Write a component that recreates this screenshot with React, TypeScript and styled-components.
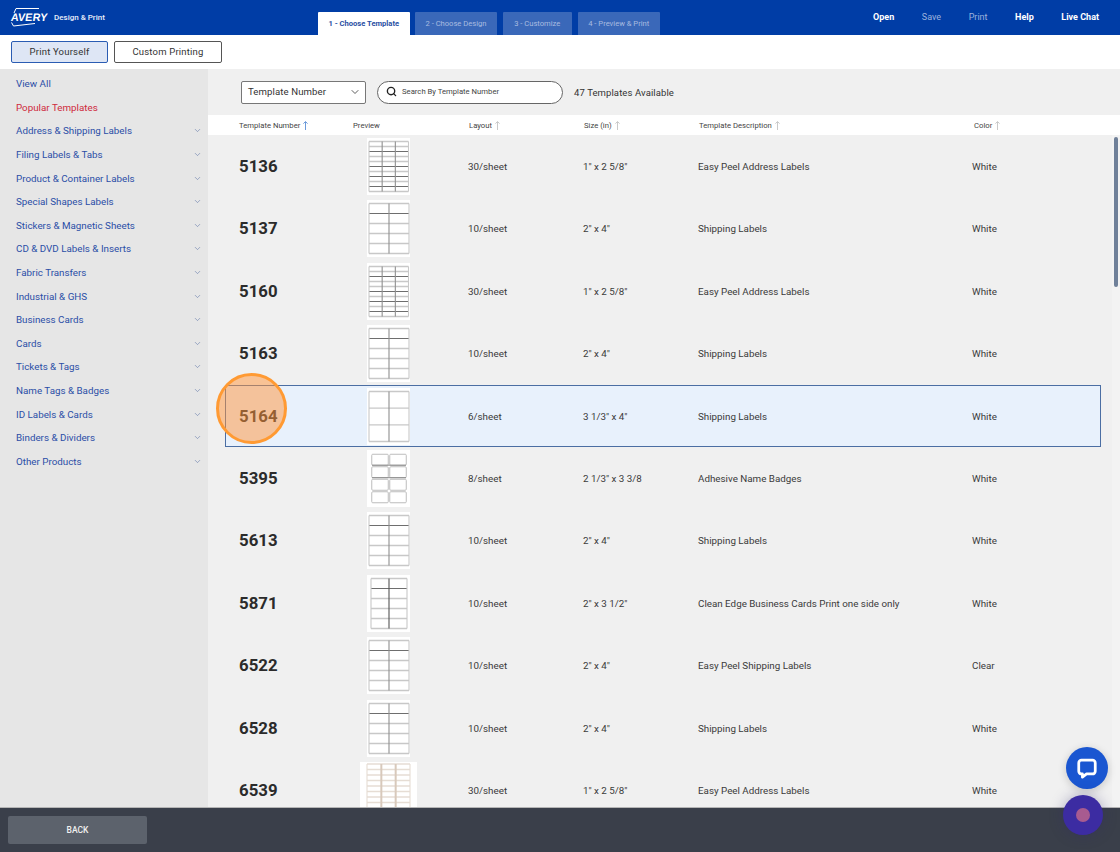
import React from 'react';
import styled, { createGlobalStyle } from 'styled-components';
import { ChevronDown, Search } from 'lucide-react';

const Global = createGlobalStyle`
  html, body { margin: 0; padding: 0; background: #fff; }
  body { font-family: Roboto, "Liberation Sans", sans-serif; color: #333; }
  * { box-sizing: border-box; }
`;

const Page = styled.div`
  position: relative;
  width: 1120px;
  height: 852px;
  display: flex;
  flex-direction: column;
  overflow: hidden;
`;

const Header = styled.header`
  height: 35px;
  flex: none;
  background: #003da6;
  display: flex;
  align-items: stretch;
  color: #fff;
`;
const Brand = styled.div`
  width: 318px;
  flex: none;
  display: flex;
  align-items: center;
  padding: 0 0 1px 11px;
`;
const LogoWrap = styled.div`
  position: relative;
  width: 37px;
  height: 18px;
  margin-right: 6px;
  display: flex;
  align-items: center;
`;
const LogoMark = styled.svg`
  position: absolute;
  left: 0;
  top: -1px;
`;
const LogoText = styled.span`
  position: relative;
  font: 700 10.8px "Liberation Sans", Arial, sans-serif;
  letter-spacing: 0.1px;
  color: #fff;
  transform: skewX(-8deg);
`;
const BrandName = styled.span`
  font-size: 8px;
  font-weight: 500;
  color: #e8eefa;
`;
const Tabs = styled.nav`
  display: flex;
  align-items: flex-end;
  gap: 5.5px;
  flex: 1;
`;
const Tab = styled.div<{ $active?: boolean; $w: number }>`
  height: 23px;
  width: ${p => p.$w}px;
  display: flex;
  align-items: center;
  justify-content: center;
  font-size: 7.6px;
  font-weight: ${p => (p.$active ? 700 : 400)};
  color: ${p => (p.$active ? '#2a4fa3' : '#a9bce0')};
  background: ${p => (p.$active ? '#fff' : '#3a68b9')};
  border-radius: 1px 1px 0 0;
`;
const TopLinks = styled.div`
  display: flex;
  align-items: center;
  padding: 0 21px 1px 0;
  gap: 27.6px;
`;
const TopLink = styled.span<{ $dim?: boolean }>`
  font-size: 9px;
  font-weight: ${p => (p.$dim ? 400 : 700)};
  color: ${p => (p.$dim ? '#9db3dc' : '#fff')};
`;

const SubBar = styled.div`
  height: 34px;
  flex: none;
  background: #fff;
  display: flex;
  align-items: center;
  gap: 6px;
  padding: 0 0 0 11px;
`;
const ModeButton = styled.button<{ $on?: boolean }>`
  height: 22px;
  width: ${p => (p.$on ? 97 : 108)}px;
  padding: 0 0 1px;
  border-radius: 2px;
  border: ${p => (p.$on ? '1.5px solid #2a5cb3' : '1px solid #555')};
  background: ${p => (p.$on ? '#dee6f5' : '#fff')};
  font: 400 9.5px Roboto, sans-serif;
  letter-spacing: 0.2px;
  color: #333;
`;

const Main = styled.div`
  flex: 1;
  min-height: 0;
  display: flex;
`;
const Sidebar = styled.aside`
  width: 208px;
  flex: none;
  background: #e6e6e6;
  padding: 3px 0 0 16px;
`;
const SideItem = styled.div<{ $red?: boolean }>`
  height: 23.6px;
  display: flex;
  align-items: center;
  justify-content: space-between;
  padding-right: 6.5px;
  font-size: 9.8px;
  font-weight: 400;
  color: ${p => (p.$red ? '#cf2a3c' : '#2b4ea6')};
`;
const SideChevron = styled(ChevronDown)`
  color: #647aaa;
`;

const Content = styled.section`
  position: relative;
  flex: 1;
  min-width: 0;
  background: #f0f0f0;
  display: flex;
  flex-direction: column;
`;
const Filters = styled.div`
  height: 46px;
  flex: none;
  display: flex;
  align-items: center;
  padding: 0 0 0 33px;
`;
const SelectBox = styled.div`
  width: 125px;
  height: 23px;
  background: #fff;
  border: 1px solid #777;
  border-radius: 2px;
  display: flex;
  align-items: center;
  justify-content: space-between;
  padding: 0 4px 1px 6px;
  font-size: 9.6px;
  letter-spacing: 0.1px;
  color: #333;
  margin-right: 11px;
`;
const SearchBox = styled.div`
  width: 186px;
  height: 23px;
  background: #fff;
  border: 1px solid #666;
  border-radius: 12px;
  display: flex;
  align-items: center;
  gap: 5px;
  padding: 0 0 1px 8px;
  font-size: 7.7px;
  color: #444;
  margin-right: 11px;
`;
const Count = styled.span`
  font-size: 9.5px;
  letter-spacing: 0.1px;
  color: #333;
`;

const columns = '114px 115px 115px 115px 274px 1fr';

const TableHead = styled.div`
  height: 20px;
  flex: none;
  background: #fff;
  padding-left: 31px;
  display: grid;
  grid-template-columns: ${columns};
  align-items: center;
`;
const HeadCell = styled.div<{ $nudge?: number }>`
  display: flex;
  align-items: center;
  gap: 3px;
  font-size: 7.7px;
  color: #444;
  padding-left: ${p => p.$nudge ?? 0}px;
`;
const Rows = styled.div`
  flex: 1;
  min-height: 0;
  overflow: hidden;
  padding: 0.4px 0 0 17px;
  width: 893px;
`;
const Row = styled.div<{ $selected?: boolean }>`
  width: 876px;
  height: 62.4px;
  padding-left: 13px;
  display: grid;
  grid-template-columns: ${columns};
  align-items: center;
  border: 1px solid ${p => (p.$selected ? '#4b6ea3' : 'transparent')};
  background: ${p => (p.$selected ? '#e8f1fc' : 'transparent')};
  font-size: 9.8px;
  color: #3a3a3a;
`;
const Num = styled.div`
  font-size: 16.8px;
  font-weight: 700;
  color: #2b2b2b;
  margin-top: -1px;
`;
const PreviewCell = styled.div`
  width: 70px;
  display: flex;
  justify-content: center;
`;
const Thumb = styled.svg`
  display: block;
  flex: none;
`;
const ScrollTrack = styled.div`
  position: absolute;
  right: 0;
  top: 66px;
  bottom: 0;
  width: 8px;
  background: #f3f3f3;
`;
const ScrollThumb = styled.div`
  position: absolute;
  left: 2px;
  top: 2px;
  width: 4px;
  height: 150px;
  border-radius: 2px;
  background: #6f8099;
`;

const Footer = styled.footer`
  height: 45px;
  flex: none;
  background: #3a3f4a;
  border-top: 1px solid #b5b5b5;
  display: flex;
  align-items: center;
  padding-left: 8px;
`;
const BackButton = styled.button`
  width: 139px;
  height: 28px;
  border: 0;
  border-radius: 2px;
  background: #5c626c;
  color: #f0f0f0;
  font: 500 8.5px Roboto, sans-serif;
`;

const Spotlight = styled.div`
  position: absolute;
  left: 216px;
  top: 373px;
  width: 71px;
  height: 71px;
  border-radius: 50%;
  border: 3px solid #ff9a33;
  background: rgba(255, 148, 58, 0.5);
  pointer-events: none;
`;
const ChatBubble = styled.div`
  position: absolute;
  left: 1066px;
  top: 747px;
  width: 42px;
  height: 42px;
  border-radius: 50%;
  background: #1a56d1;
  box-shadow: 0 2px 8px rgba(0, 0, 0, 0.18);
  display: flex;
  align-items: center;
  justify-content: center;
`;
const AssistantOrb = styled.div`
  position: absolute;
  left: 1063px;
  top: 795px;
  width: 40px;
  height: 40px;
  border-radius: 50%;
  background: #3c2ca2;
  box-shadow: 0 0 14px rgba(45, 40, 110, 0.35);
  display: flex;
  align-items: center;
  justify-content: center;
`;
const OrbDot = styled.div`
  width: 14px;
  height: 14px;
  border-radius: 50%;
  background: #a85b90;
`;

const SortArrow = ({ on }: { on?: boolean }) => (
  <svg width="5" height="9" viewBox="0 0 5 9" fill="none" stroke={on ? '#5b8ed6' : '#c4c4c4'} strokeWidth="0.9">
    <path d="M2.5 9V0.8M0.4 2.6 2.5 0.6 4.6 2.6" />
  </svg>
);

type Sheet = {
  x0: number; x1: number; y0: number; y1: number;
  cols: number; rows: number;
  darkH?: number[]; darkV?: boolean; w?: number; tint?: boolean; cellGap?: number;
};

const SheetThumb = ({ s }: { s: Sheet }) => {
  const w = s.w ?? 43;
  const cw = (s.x1 - s.x0) / s.cols;
  const rh = (s.y1 - s.y0) / s.rows;
  const light = s.tint ? '#e6ddd4' : '#c8c8c8';
  const vLines = Array.from({ length: s.cols + 1 }, (_, i) => s.x0 + i * cw);
  const hLines = Array.from({ length: s.rows + 1 }, (_, i) => s.y0 + i * rh);
  if (s.cellGap) {
    const cells: React.ReactNode[] = [];
    for (let r = 0; r < s.rows; r++) {
      for (let c = 0; c < s.cols; c++) {
        cells.push(
          <rect key={`${r}-${c}`} x={s.x0 + c * cw + s.cellGap / 2} y={s.y0 + r * rh + s.cellGap / 2}
            width={cw - s.cellGap} height={rh - s.cellGap} rx="1" fill="#fff" stroke="#bdbdbd" strokeWidth="1" />
        );
      }
    }
    return (
      <Thumb width={w} height="57" viewBox={`0 0 ${w} 57`}>
        <rect width={w} height="57" fill="#fff" />
        {cells}
        {s.darkH?.map(i => (
          <line key={i} x1={s.x0 + 1} x2={s.x1 - 1} y1={s.y0 + i * rh - 0.8} y2={s.y0 + i * rh - 0.8} stroke="#8a8a8a" strokeWidth="1" />
        ))}
      </Thumb>
    );
  }
  return (
    <Thumb width={w} height="57" viewBox={`0 0 ${w} 57`}>
      <rect width={w} height="57" fill="#fff" />
      {hLines.map((y, i) => (
        <line key={`h${i}`} x1={s.x0} x2={s.x1} y1={y} y2={y}
          stroke={s.darkH?.includes(i) ? '#6e6e6e' : light} strokeWidth={s.darkH?.includes(i) ? 1 : 1.3} />
      ))}
      {vLines.map((x, i) => {
        const inner = i > 0 && i < s.cols;
        return (
          <line key={`v${i}`} x1={x} x2={x} y1={s.y0} y2={s.y1}
            stroke={inner ? (s.darkV ? '#555' : s.tint ? '#d8c9bb' : '#8f8f8f') : light}
            strokeWidth={s.tint && inner ? 2 : 1.1} />
        );
      })}
    </Thumb>
  );
};

const T30: Sheet = { x0: 2, x1: 41.5, y0: 3.5, y1: 53.5, cols: 3, rows: 10, darkH: [2, 5, 7, 9] };
const T10: Sheet = { x0: 2, x1: 42, y0: 3.5, y1: 53.5, cols: 2, rows: 5, darkH: [1] };
const T6: Sheet = { x0: 2, x1: 42, y0: 3.5, y1: 53.5, cols: 2, rows: 3 };
const T8: Sheet = { x0: 4, x1: 40, y0: 3.5, y1: 53.5, cols: 2, rows: 4, darkH: [1, 2], cellGap: 1.5 };
const TBiz: Sheet = { x0: 4, x1: 40, y0: 3.5, y1: 53.5, cols: 2, rows: 5, darkH: [1], darkV: true };
const TPeach: Sheet = { x0: 7, x1: 50, y0: 2, y1: 57, cols: 3, rows: 10, w: 57, tint: true };

type Item = { n: string; t: Sheet; l: string; s: string; d: string; c: string; sel?: boolean };
const data: Item[] = [
  { n: '5136', t: T30, l: '30/sheet', s: '1" x 2 5/8"', d: 'Easy Peel Address Labels', c: 'White' },
  { n: '5137', t: T10, l: '10/sheet', s: '2" x 4"', d: 'Shipping Labels', c: 'White' },
  { n: '5160', t: T30, l: '30/sheet', s: '1" x 2 5/8"', d: 'Easy Peel Address Labels', c: 'White' },
  { n: '5163', t: T10, l: '10/sheet', s: '2" x 4"', d: 'Shipping Labels', c: 'White' },
  { n: '5164', t: T6, l: '6/sheet', s: '3 1/3" x 4"', d: 'Shipping Labels', c: 'White', sel: true },
  { n: '5395', t: T8, l: '8/sheet', s: '2 1/3" x 3 3/8', d: 'Adhesive Name Badges', c: 'White' },
  { n: '5613', t: T10, l: '10/sheet', s: '2" x 4"', d: 'Shipping Labels', c: 'White' },
  { n: '5871', t: TBiz, l: '10/sheet', s: '2" x 3 1/2"', d: 'Clean Edge Business Cards Print one side only', c: 'White' },
  { n: '6522', t: T10, l: '10/sheet', s: '2" x 4"', d: 'Easy Peel Shipping Labels', c: 'Clear' },
  { n: '6528', t: T10, l: '10/sheet', s: '2" x 4"', d: 'Shipping Labels', c: 'White' },
  { n: '6539', t: TPeach, l: '30/sheet', s: '1" x 2 5/8"', d: 'Easy Peel Address Labels', c: 'White' },
];

const categories = [
  'Address & Shipping Labels', 'Filing Labels & Tabs', 'Product & Container Labels',
  'Special Shapes Labels', 'Stickers & Magnetic Sheets', 'CD & DVD Labels & Inserts',
  'Fabric Transfers', 'Industrial & GHS', 'Business Cards', 'Cards', 'Tickets & Tags',
  'Name Tags & Badges', 'ID Labels & Cards', 'Binders & Dividers', 'Other Products',
];

const heads: { label: string; on?: boolean; arrow?: boolean; nudge?: number }[] = [
  { label: 'Template Number', on: true, arrow: true },
  { label: 'Preview' },
  { label: 'Layout', arrow: true, nudge: 1 },
  { label: 'Size (in)', arrow: true, nudge: 1 },
  { label: 'Template Description', arrow: true, nudge: 1 },
  { label: 'Color', arrow: true, nudge: 2 },
];

export default function App() {
  return (
    <Page>
      <Global />
      <Header>
        <Brand>
          <LogoWrap>
            <LogoMark width="38" height="20" viewBox="0 0 38 20" fill="none" stroke="#fff" strokeWidth="1">
              <path d="M3 6 5 1.5 28 1.5" />
              <path d="M0.5 15.5 2.5 19 24 16.5" />
            </LogoMark>
            <LogoText>AVERY</LogoText>
          </LogoWrap>
          <BrandName>Design &amp; Print</BrandName>
        </Brand>
        <Tabs>
          <Tab $active $w={91.5}>1 - Choose Template</Tab>
          <Tab $w={82}>2 - Choose Design</Tab>
          <Tab $w={69.5}>3 - Customize</Tab>
          <Tab $w={82.5}>4 - Preview &amp; Print</Tab>
        </Tabs>
        <TopLinks>
          <TopLink>Open</TopLink>
          <TopLink $dim>Save</TopLink>
          <TopLink $dim>Print</TopLink>
          <TopLink>Help</TopLink>
          <TopLink>Live Chat</TopLink>
        </TopLinks>
      </Header>
      <SubBar>
        <ModeButton $on>Print Yourself</ModeButton>
        <ModeButton>Custom Printing</ModeButton>
      </SubBar>
      <Main>
        <Sidebar>
          <SideItem>View All</SideItem>
          <SideItem $red>Popular Templates</SideItem>
          {categories.map(c => (
            <SideItem key={c}>
              {c}
              <SideChevron size={9} strokeWidth={1.6} />
            </SideItem>
          ))}
        </Sidebar>
        <Content>
          <Filters>
            <SelectBox>
              Template Number
              <ChevronDown size={12} strokeWidth={1.6} color="#333" />
            </SelectBox>
            <SearchBox>
              <Search size={11} strokeWidth={3} color="#222" />
              Search By Template Number
            </SearchBox>
            <Count>47 Templates Available</Count>
          </Filters>
          <TableHead>
            {heads.map(h => (
              <HeadCell key={h.label} $nudge={h.nudge}>
                {h.label}
                {h.arrow && <SortArrow on={h.on} />}
              </HeadCell>
            ))}
          </TableHead>
          <Rows>
            {data.map(r => (
              <Row key={r.n} $selected={r.sel}>
                <Num>{r.n}</Num>
                <PreviewCell><SheetThumb s={r.t} /></PreviewCell>
                <div>{r.l}</div>
                <div>{r.s}</div>
                <div>{r.d}</div>
                <div>{r.c}</div>
              </Row>
            ))}
          </Rows>
          <ScrollTrack><ScrollThumb /></ScrollTrack>
        </Content>
      </Main>
      <Footer>
        <BackButton>BACK</BackButton>
      </Footer>
      <Spotlight />
      <ChatBubble>
        <svg width="22" height="22" viewBox="0 0 24 24" fill="none">
          <path d="M6 3.5h12a3 3 0 0 1 3 3v9a3 3 0 0 1-3 3h-6.5L7 22v-3.5H6a3 3 0 0 1-3-3v-9a3 3 0 0 1 3-3Z" fill="#1a56d1" stroke="#fff" strokeWidth="3" strokeLinejoin="round" />
        </svg>
      </ChatBubble>
      <AssistantOrb><OrbDot /></AssistantOrb>
    </Page>
  );
}
